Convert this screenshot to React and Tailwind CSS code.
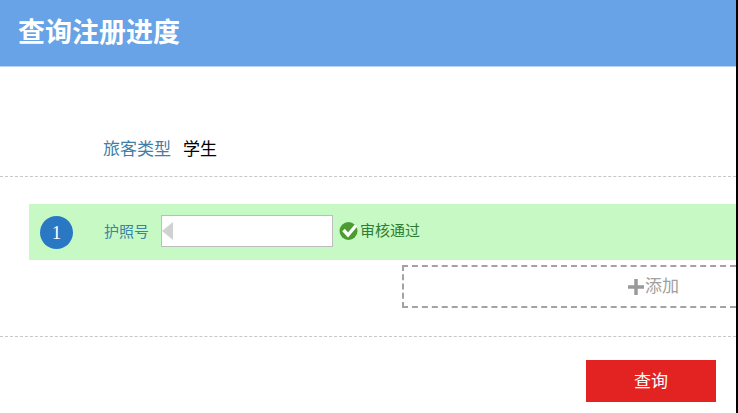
const cjk = { fontFamily: '"Liberation Serif", "Noto Sans CJK SC", serif' };

function Divider({ className }) {
  return <div className={`border-t border-dashed border-[#c4c8cc] ${className}`} />;
}

function PassIcon() {
  return (
    <svg width="20" height="20" viewBox="0 0 20 20" className="shrink-0">
      <circle cx="9.5" cy="10" r="9" fill="#4b9b32" />
      <path d="M4.5 9 L9 14 L17 4.5" fill="none" stroke="#fff" strokeWidth="3.4" />
    </svg>
  );
}

export default function App() {
  return (
    <div className="flex w-[738px] h-[413px] overflow-hidden bg-white" style={cjk}>
      <div className="w-[736px] shrink-0">
        {/* header */}
        <header className="h-[67px] flex items-center pl-[18px] bg-[#67a3e6] border-b border-[#b9d4f2]">
          <h1 className="text-[27px] font-bold text-white leading-none">查询注册进度</h1>
        </header>

        {/* traveller type */}
        <div className="flex items-center h-[109px] pt-[56px] pl-[103px]">
          <span className="text-[17px] text-[#3f7fa8] leading-none">旅客类型</span>
          <span className="ml-[12px] text-[17px] text-black leading-none">学生</span>
        </div>
        <Divider />

        {/* passport row */}
        <div className="mt-[27px] ml-[29px] h-[56px] flex items-center pl-[11px] bg-[#c6f9c4]">
          <div className="w-[33px] h-[33px] rounded-full bg-[#2a78c4] flex items-center justify-center text-white text-[19px] leading-none">1</div>
          <span className="ml-[31px] text-[15px] text-[#3c84a4] leading-none">护照号</span>
          <div className="relative ml-[12px] mb-[2px] w-[172px] h-[32px] bg-white border border-[#bdbdbd]">
            <div className="absolute left-0 top-[6px] w-0 h-0 border-y-[9px] border-y-transparent border-r-[11px] border-r-[#cfd3cf]" />
          </div>
          <div className="ml-[6px] mb-[2px]"><PassIcon /></div>
          <span className="ml-[1px] mb-[1px] text-[15px] text-[#2f7d32] leading-none">审核通过</span>
        </div>

        {/* add box */}
        <div className="mt-[5px] ml-[402px] h-[43px] flex items-center justify-end pr-[57px] border-2 border-r-0 border-dashed border-[#a3a3a3]">
          <svg width="18" height="18" viewBox="0 0 18 18" className="shrink-0">
            <path d="M1 9 H17 M9 1 V17" stroke="#9a9a9a" strokeWidth="3.5" fill="none" />
          </svg>
          <span className="text-[17px] text-[#a0a0a0] leading-none">添加</span>
        </div>
        <Divider className="mt-[28px]" />

        {/* submit */}
        <div className="flex justify-end mt-[23px] pr-[20px]">
          <button className="w-[130px] h-[42px] bg-[#e32222] text-white text-[17px] leading-none">查询</button>
        </div>
      </div>
      <div className="flex-1 bg-black" />
    </div>
  );
}
